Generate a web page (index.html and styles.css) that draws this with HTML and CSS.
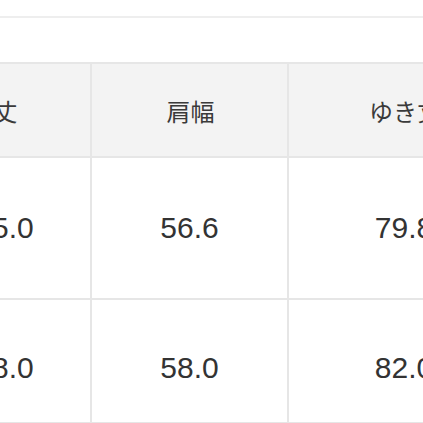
FILE: index.html
```html
<!DOCTYPE html>
<html lang="ja">
<head>
<meta charset="utf-8">
<link rel="stylesheet" href="styles.css">
</head>
<body>
<div class="topbar"></div>
<div class="wrap">
<table class="size">
<colgroup><col class="c1"><col class="c2"><col class="c3"></colgroup>
<thead>
<tr><th>着丈</th><th>肩幅</th><th>ゆき丈</th></tr>
</thead>
<tbody>
<tr class="r1"><td class="first">75.0</td><td>56.6</td><td>79.8</td></tr>
<tr class="r2"><td class="first">78.0</td><td>58.0</td><td>82.0</td></tr>
</tbody>
</table>
</div>
</body>
</html>
```
FILE: styles.css
```css
html, body {
  margin: 0;
  padding: 0;
  background: #ffffff;
  overflow: hidden;
  width: 423px;
  height: 423px;
}
.topbar {
  height: 16px;
  border-bottom: 2px solid #eeeeee;
}
.wrap {
  margin-top: 44px;
  margin-left: -107px;
}
.size {
  border-collapse: collapse;
  table-layout: fixed;
  width: 626px;
}
.c1 { width: 197px; }
.c2 { width: 197px; }
.c3 { width: 232px; }
.size th, .size td {
  border: 2px solid #e6e6e6;
  text-align: center;
  padding: 0;
  color: #333333;
}
.size th {
  background: #f3f3f3;
  height: 92px;
  font-family: "Noto Sans CJK JP", "Noto Sans", sans-serif;
  font-weight: 400;
  font-size: 24px;
  color: #3a3a3a;
  padding-left: 2px;
}
.size td {
  background: #ffffff;
  font-family: "Liberation Sans", Arial, sans-serif;
  font-size: 30px;
}
.size td.first {
  padding-left: 24px;
}
.r1 td { height: 140px; }
.r2 td {
  height: 108px;
  padding-top: 14px;
}
```
